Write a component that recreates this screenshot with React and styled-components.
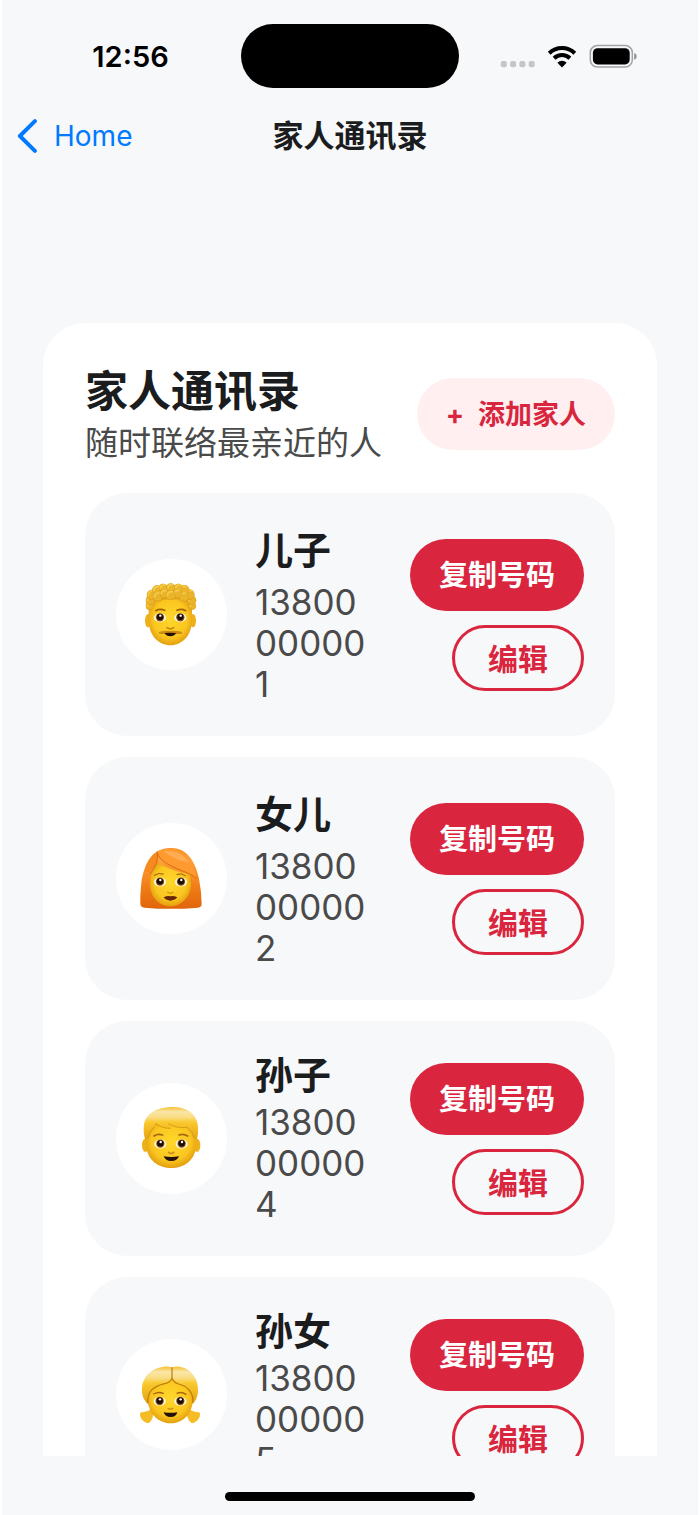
import React from "react";
import styled, { createGlobalStyle, css } from "styled-components";

const GlobalStyle = createGlobalStyle`
  *, *::before, *::after { box-sizing: border-box; }
  body {
    margin: 0;
    background: #ffffff;
    color: #1b1c1e;
    font-family: Inter, "Noto Sans CJK SC", sans-serif;
  }
  button { font-family: inherit; cursor: pointer; }
  h1, h2, h3, p, ul { margin: 0; padding: 0; }
`;

const Screen = styled.div`
  display: flex;
  flex-direction: column;
  height: 100vh;
  margin: 0 2px;
  background: #f7f8fa;
`;

const StatusBar = styled.header`
  display: grid;
  grid-template-columns: 1fr 218px 1fr;
  align-items: center;
  padding-top: 24px;
  flex: none;
`;

const Time = styled.time`
  padding: 2px 0 0 18px;
  text-align: center;
  color: #000;
  font-size: 29px;
  font-weight: 600;
  line-height: 34px;
`;

const Island = styled.div`
  height: 64px;
  border-radius: 32px;
  background: #000;
`;

const StatusIcons = styled.div`
  display: flex;
  align-items: center;
  gap: 12px;
  padding-left: 41px;

  svg { display: block; flex: none; }
`;

const NavBar = styled.nav`
  display: grid;
  grid-template-columns: 1fr auto 1fr;
  align-items: center;
  height: 96px;
  padding: 0 15px;
  flex: none;
`;

const BackLink = styled.a`
  display: flex;
  align-items: center;
  gap: 16px;
  color: #007aff;
  font-size: 28px;
  line-height: 34px;
  text-decoration: none;
`;

const NavTitle = styled.h1`
  font-size: 31px;
  font-weight: 700;
  line-height: 40px;
`;

const ScrollArea = styled.main`
  flex: 1;
  min-height: 0;
  overflow-y: auto;
  scrollbar-width: none;
  padding: 139px 41px 42px;
`;

const Card = styled.section`
  padding: 42px;
  border-radius: 42px;
  background: #ffffff;
`;

const CardHeader = styled.div`
  display: flex;
  align-items: center;
  justify-content: space-between;
  margin-bottom: 30px;
`;

const CardTitle = styled.h2`
  margin-bottom: 6px;
  font-size: 43px;
  font-weight: 700;
  line-height: 52px;
`;

const CardSubtitle = styled.p`
  color: #4a4a4a;
  font-size: 33px;
  line-height: 40px;
`;

const Pill = styled.button`
  display: flex;
  align-items: center;
  justify-content: center;
  border: 0;
  border-radius: 36px;
  padding: 2px 29px 0;
  height: 72px;
  flex: none;
  font-size: 29px;
  font-weight: 700;
  line-height: 36px;
  white-space: nowrap;

  ${({ $kind }) =>
    $kind === "soft" &&
    css`
      gap: 14px;
      background: #ffeff0;
      color: #d9263e;
      font-size: 27px;
    `}
  ${({ $kind }) =>
    $kind === "solid" &&
    css`
      background: #d9263e;
      color: #ffffff;
    `}
  ${({ $kind }) =>
    $kind === "outline" &&
    css`
      height: 66px;
      border: 3px solid #d9263e;
      background: transparent;
      color: #d9263e;
      font-size: 30px;
      padding: 2px 33px 0;
    `}
`;

const ContactList = styled.ul`
  display: flex;
  flex-direction: column;
  gap: 21px;
  list-style: none;
`;

const ContactRow = styled.li`
  display: flex;
  align-items: center;
  padding: 31px;
  border-radius: 42px;
  background: #f7f8fa;
`;

const Avatar = styled.div`
  width: 111px;
  height: 111px;
  flex: none;
  border-radius: 50%;
  background: #ffffff;
  margin-right: 28px;

  svg { display: block; width: 100%; height: 100%; }
`;

const Info = styled.div`
  flex: 1;
  min-width: 0;
  padding-right: 36px;
`;

const Name = styled.h3`
  font-size: 38px;
  font-weight: 700;
  line-height: ${({ $compact }) => ($compact ? "46px" : "52px")};
  padding-bottom: ${({ $compact }) => ($compact ? "4px" : "6px")};
`;

const Phone = styled.p`
  color: #4a4a4a;
  font-size: 35px;
  line-height: 41px;
  word-break: break-all;
`;

const Actions = styled.div`
  display: flex;
  flex-direction: column;
  align-items: flex-end;
  gap: 14px;
  flex: none;
`;

const HomeArea = styled.footer`
  display: flex;
  align-items: flex-end;
  justify-content: center;
  height: 59px;
  padding-bottom: 14px;
  flex: none;
`;

const HomeIndicator = styled.div`
  width: 250px;
  height: 9px;
  border-radius: 5px;
  background: #000;
`;

function SignalDots() {
  return (
    <svg width="35" height="24" viewBox="0 0 35 24" fill="#c5c6c8" aria-hidden="true">
      {[0, 9.3, 18.6, 27.9].map((x) => (
        <rect key={x} x={x + 0.8} y="17" width="6" height="6.2" rx="2" />
      ))}
    </svg>
  );
}

function Wifi() {
  return (
    <svg width="30" height="24" viewBox="0 0 30 24" aria-hidden="true">
      <g fill="none" stroke="#000" strokeWidth="4">
        <path d="M2.2 9.2a18.3 18.3 0 0 1 25.6 0" />
        <path d="M7.1 14.2a11.4 11.4 0 0 1 15.8 0" />
      </g>
      <path d="M10.4 18.7a6.7 6.7 0 0 1 9.2 0L15 23.4z" fill="#000" />
    </svg>
  );
}

function Battery() {
  return (
    <svg width="48" height="24" viewBox="0 0 48 24" aria-hidden="true">
      <rect x="1.3" y="1.6" width="42" height="21.4" rx="7" fill="none" stroke="#a2a3a5" strokeWidth="1.5" />
      <rect x="3.9" y="4.2" width="36.8" height="16.2" rx="4.6" fill="#000" />
      <path d="M45.2 9.1c3.2 1.2 3.2 5.4 0 6.6z" fill="#8f9092" />
    </svg>
  );
}

function BackChevron() {
  return (
    <svg width="21" height="34" viewBox="0 0 21 34" fill="none" aria-hidden="true">
      <path d="M17.9 2.2 2.9 17l15 14.8" stroke="#007aff" strokeWidth="4" strokeLinecap="round" strokeLinejoin="round" />
    </svg>
  );
}

function Eyes({ left, right, y }) {
  return [left, right].map((x) => (
    <g key={x}>
      <ellipse cx={x} cy={y} rx="18" ry="13.5" fill="#fffae6" />
      <circle cx={x} cy={y - 1} r="12.5" fill="#85511a" />
      <circle cx={x} cy={y - 2} r="9.5" fill="#1c0d03" />
      <circle cx={x + 1} cy={y - 6} r="3.6" fill="#fff" />
    </g>
  ));
}

function FaceGradients({ id }) {
  return (
    <defs>
      <radialGradient id={`${id}-face`} cx="50%" cy="45%" r="60%">
        <stop offset="0" stopColor="#ffd82c" />
        <stop offset="0.65" stopColor="#fac620" />
        <stop offset="1" stopColor="#dc930b" />
      </radialGradient>
      <linearGradient id={`${id}-hair`} x1="0" y1="0" x2="0" y2="1">
        <stop offset="0" stopColor="#f3bf2c" />
        <stop offset="0.14" stopColor="#fbe6a8" />
        <stop offset="0.3" stopColor="#f9dd85" />
        <stop offset="0.45" stopColor="#f9c92e" />
        <stop offset="1" stopColor="#e5a010" />
      </linearGradient>
      <linearGradient id={`${id}-red`} x1="0" y1="0" x2="0" y2="1">
        <stop offset="0" stopColor="#f88b1c" />
        <stop offset="0.2" stopColor="#ffa139" />
        <stop offset="0.65" stopColor="#f17c16" />
        <stop offset="1" stopColor="#df650b" />
      </linearGradient>
    </defs>
  );
}

const CURLS = [
  [119, 170, 12], [247, 170, 11], [121, 154, 14], [245, 153, 14], [126, 137, 16], [238, 136, 16],
  [141, 123, 15], [223, 122, 15], [159, 116, 13], [205, 116, 13], [182, 115, 13],
  [143, 142, 15], [222, 142, 15], [163, 133, 14], [202, 133, 14], [182, 138, 15],
];

function CurlyMan() {
  return (
    <svg viewBox="18 29 333 333" aria-hidden="true">
      <FaceGradients id="son" />
      <ellipse cx="114" cy="214" rx="9" ry="20" fill="#eeb01b" />
      <ellipse cx="249" cy="214" rx="9" ry="20" fill="#eeb01b" />
      <path d="M116 175Q120 143 181 143T246 175V212C246 258 216 288 181 288S116 258 116 212Z" fill="url(#son-face)" />
      <path d="M112 180Q104 150 122 130Q145 106 182 106T242 130Q260 150 251 180L240 160Q220 148 181 150T124 160Z" fill="#e0a41c" />
      {CURLS.map(([x, y, r]) => (
        <g key={`${x}-${y}`}>
          <circle cx={x} cy={y} r={r} fill="#dca11c" />
          <circle cx={x} cy={y - 1} r={r - 1.5} fill="#ebb52b" />
          <path d={`M${x - r + 5} ${y}q2-${r - 3} ${r} -${r - 4}`} fill="none" stroke="#f4cb4a" strokeWidth="5" strokeLinecap="round" />
        </g>
      ))}
      <path d="M137 184q13-7 27-1M201 183q14-6 26 1" fill="none" stroke="#a3620b" strokeWidth="5" strokeLinecap="round" />
      <Eyes left={150} right={211} y={205} />
      <path d="M171 235q10 7 20 0" fill="none" stroke="#c98510" strokeWidth="5" strokeLinecap="round" />
      <path d="M147 248q20-5 34-3 16-2 35 3v5q-16 2-35 0-20 2-34 0z" fill="#cd8b10" />
      <path d="M164 251q17-2 34 0-5 10-17 10t-17-10z" fill="#241005" />
    </svg>
  );
}

function RedHairWoman() {
  return (
    <svg viewBox="18 27 333 333" aria-hidden="true">
      <FaceGradients id="daughter" />
      <path d="M183 102C125 102 99 151 93 218Q90 246 91 270Q92 280 103 281Q182 288 264 281Q275 280 275 270Q275 235 267 194C255 137 228 102 183 102Z" fill="url(#daughter-red)" />
      <path d="M139 145Q119 180 120 211C121 252 150 277 181 277S243 250 243 210L240 182Q178 169 139 145Z" fill="url(#daughter-face)" />
      <path d="M140 113Q114 129 103 174Q122 181 139 150Q147 133 140 113Z" fill="#f68a21" />
      <path d="M141 112C150 149 207 164 241 181Q255 187 260 193C247 134 215 104 180 104Q158 103 141 112Z" fill="#ff9a31" />
      <path d="M141 112C148 150 204 163 241 181l20 12M142 117Q147 149 120 180" fill="none" stroke="#d76e0f" strokeWidth="3" />
      <path d="M160 112Q211 106 238 145Q195 140 160 112Z" fill="#ffbb6b" opacity="0.6" />
      <path d="M133 184q12-9 27-4M201 181q13-5 25 4" fill="none" stroke="#9a5409" strokeWidth="3" strokeLinecap="round" />
      <Eyes left={150} right={213} y={204} />
      <path d="M173 235q8 6 16 0" fill="none" stroke="#d38c0e" strokeWidth="4" strokeLinecap="round" />
      <path d="M161 250q12-6 20-3 8-3 21 3-9 10-21 10t-20-10z" fill="#682609" />
    </svg>
  );
}

function Boy() {
  return (
    <svg viewBox="18 27 333 333" aria-hidden="true">
      <FaceGradients id="grandson" />
      <ellipse cx="106" cy="214" rx="10" ry="20" fill="#eeb01b" />
      <ellipse cx="261" cy="214" rx="10" ry="20" fill="#eeb01b" />
      <path d="M109 177Q115 139 184 139T258 177V212C258 258 222 282 184 282S109 258 109 212Z" fill="url(#grandson-face)" />
      <path d="M108 201Q98 183 102 151C108 117 141 100 184 99S257 116 263 150Q267 181 259 201Q253 192 248 178Q244 167 232 159Q202 163 176 148Q184 157 182 163Q158 162 139 148Q132 151 132 158Q122 169 117 183Z" fill="url(#grandson-hair)" />
      <path d="M132 158q-15 15-18 35M232 160q18 15 21 33M176 149q22 15 55 11M137 149q19 15 45 14" fill="none" stroke="#d39316" strokeWidth="2.5" />
      <path d="M132 186q11-8 26-3M207 183q13-5 26 3" fill="none" stroke="#a9680a" strokeWidth="5" strokeLinecap="round" />
      <Eyes left={151} right={215} y={210} />
      <path d="M176 235q8 7 15 0" fill="none" stroke="#c98510" strokeWidth="5" strokeLinecap="round" />
      <path d="M161 247q23 4 46 0-5 14-23 14t-23-14z" fill="#241005" />
    </svg>
  );
}

function Girl() {
  return (
    <svg viewBox="18 29 333 333" aria-hidden="true">
      <FaceGradients id="granddaughter" />
      <path d="M125 239Q107 251 93 248Q87 254 93 267Q102 281 116 282Q130 271 130 248ZM237 239Q253 251 267 248Q273 254 267 267Q258 281 245 282Q231 271 230 248Z" fill="#f5bc25" />
      <path d="M112 200Q127 145 181 144T250 200C250 254 218 282 182 282S112 254 112 200Z" fill="url(#granddaughter-face)" />
      <path d="M186 114Q171 109 153 114C114 122 93 151 96 188Q98 211 114 224Q110 203 122 186Q139 169 165 163Q181 159 185 147Q190 160 205 164Q229 170 240 186Q252 203 248 224Q262 210 264 188C266 151 247 122 216 114Q199 109 186 114Z" fill="url(#granddaughter-hair)" />
      <path d="M186 114v32q-6 14-22 17-31 7-44 25-9 17-6 34M186 146q5 14 20 18 24 6 35 23 10 16 7 34" fill="none" stroke="#bd7c0c" strokeWidth="3.5" />
      <path d="M131 194q14-8 29-2M201 192q14-6 27 3" fill="none" stroke="#a9680a" strokeWidth="4" strokeLinecap="round" />
      <Eyes left={149} right={211} y={216} />
      <path d="M174 237q7 5 14 0" fill="none" stroke="#d38c0e" strokeWidth="4" strokeLinecap="round" />
      <path d="M161 249q20 3 41 0-3 14-20 14t-21-14z" fill="#241005" />
    </svg>
  );
}

const contacts = [
  { name: "儿子", phone: "13800000001", Face: CurlyMan },
  { name: "女儿", phone: "13800000002", Face: RedHairWoman },
  { name: "孙子", phone: "13800000004", Face: Boy, compact: true },
  { name: "孙女", phone: "13800000005", Face: Girl, compact: true },
];

function Contact({ name, phone, Face, compact }) {
  return (
    <ContactRow>
      <Avatar>
        <Face />
      </Avatar>
      <Info>
        <Name $compact={compact}>{name}</Name>
        <Phone>{phone}</Phone>
      </Info>
      <Actions>
        <Pill type="button" $kind="solid">复制号码</Pill>
        <Pill type="button" $kind="outline">编辑</Pill>
      </Actions>
    </ContactRow>
  );
}

export default function App() {
  return (
    <>
      <GlobalStyle />
      <Screen>
        <StatusBar>
          <Time>12:56</Time>
          <Island />
          <StatusIcons>
            <SignalDots />
            <Wifi />
            <Battery />
          </StatusIcons>
        </StatusBar>
        <NavBar>
          <BackLink href="#home">
            <BackChevron />
            Home
          </BackLink>
          <NavTitle>家人通讯录</NavTitle>
        </NavBar>
        <ScrollArea>
          <Card>
            <CardHeader>
              <div>
                <CardTitle>家人通讯录</CardTitle>
                <CardSubtitle>随时联络最亲近的人</CardSubtitle>
              </div>
              <Pill type="button" $kind="soft">
                <span>+</span>
                <span>添加家人</span>
              </Pill>
            </CardHeader>
            <ContactList>
              {contacts.map((contact) => (
                <Contact key={contact.phone} {...contact} />
              ))}
            </ContactList>
          </Card>
        </ScrollArea>
        <HomeArea>
          <HomeIndicator />
        </HomeArea>
      </Screen>
    </>
  );
}
